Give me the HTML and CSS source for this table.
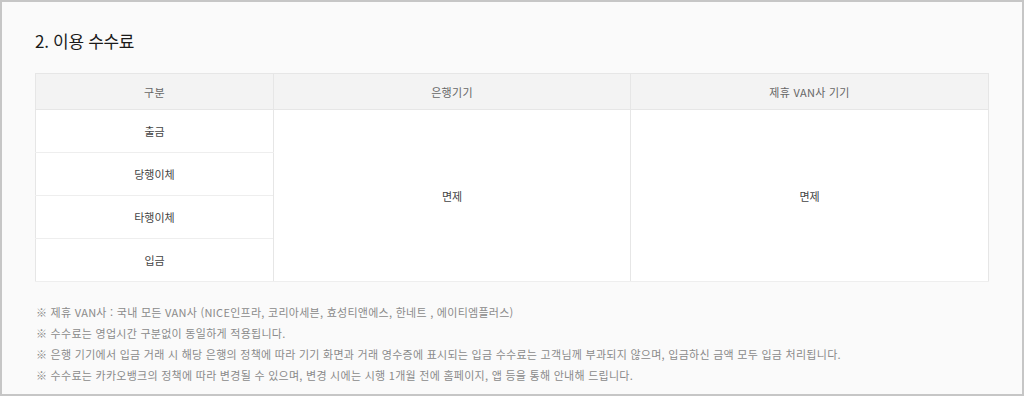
FILE: index.html
```html
<!DOCTYPE html>
<html lang="ko">
<head>
<meta charset="utf-8">
<link rel="stylesheet" href="styles.css">
</head>
<body>
<div class="frame">
  <h2 class="title">2. 이용 수수료</h2>
  <table class="fee">
    <colgroup>
      <col class="c1"><col class="c2"><col class="c3">
    </colgroup>
    <thead>
      <tr><th>구분</th><th>은행기기</th><th>제휴 VAN사 기기</th></tr>
    </thead>
    <tbody>
      <tr><td>출금</td><td rowspan="4">면제</td><td rowspan="4">면제</td></tr>
      <tr><td>당행이체</td></tr>
      <tr><td>타행이체</td></tr>
      <tr><td>입금</td></tr>
    </tbody>
  </table>
  <ul class="notes">
    <li>※ 제휴 VAN사 : 국내 모든 VAN사 (NICE인프라, 코리아세븐, 효성티앤에스, 한네트 , 에이티엠플러스)</li>
    <li>※ 수수료는 영업시간 구분없이 동일하게 적용됩니다.</li>
    <li>※ 은행 기기에서 입금 거래 시 해당 은행의 정책에 따라 기기 화면과 거래 영수증에 표시되는 입금 수수료는 고객님께 부과되지 않으며, 입금하신 금액 모두 입금 처리됩니다.</li>
    <li>※ 수수료는 카카오뱅크의 정책에 따라 변경될 수 있으며, 변경 시에는 시행 1개월 전에 홈페이지, 앱 등을 통해 안내해 드립니다.</li>
  </ul>
</div>
</body>
</html>
```
FILE: styles.css
```css
html, body {
  margin: 0;
  padding: 0;
  background: #fafafa;
}
body {
  font-family: "Noto Sans CJK KR", "Noto Sans", sans-serif;
}
.frame {
  box-sizing: border-box;
  width: 1024px;
  height: 396px;
  border: 2px solid #c6c6c6;
  background: #fafafa;
  padding: 0 34px 0 33px;
}
.title {
  margin: 0;
  padding-top: 27px;
  height: 44px;
  font-size: 17px;
  line-height: 24px;
  font-weight: 400;
  color: #1a1a1a;
  letter-spacing: -0.3px;
}
.fee {
  width: 953px;
  border-collapse: collapse;
  table-layout: fixed;
  background: #fff;
  border: 1px solid #e6e6e6;
}
.c1 { width: 238px; }
.c2 { width: 357px; }
.c3 { width: 358px; }
.fee th {
  height: 35px;
  background: #f3f3f3;
  border: 1px solid #e6e6e6;
  font-size: 11px;
  font-weight: 400;
  color: #666;
  padding: 0;
  letter-spacing: 0.3px;
}
.fee td {
  height: 42px;
  border: 1px solid #eeeeee;
  border-left-color: #e6e6e6;
  border-right-color: #e6e6e6;
  text-align: center;
  font-size: 11px;
  color: #444;
  padding: 0;
}
.notes {
  list-style: none;
  margin: 20px 0 0 1px;
  padding: 0;
}
.notes li {
  font-size: 11px;
  line-height: 21px;
  color: #8a8a8a;
  white-space: nowrap;
  letter-spacing: 0.27px;
}
```
